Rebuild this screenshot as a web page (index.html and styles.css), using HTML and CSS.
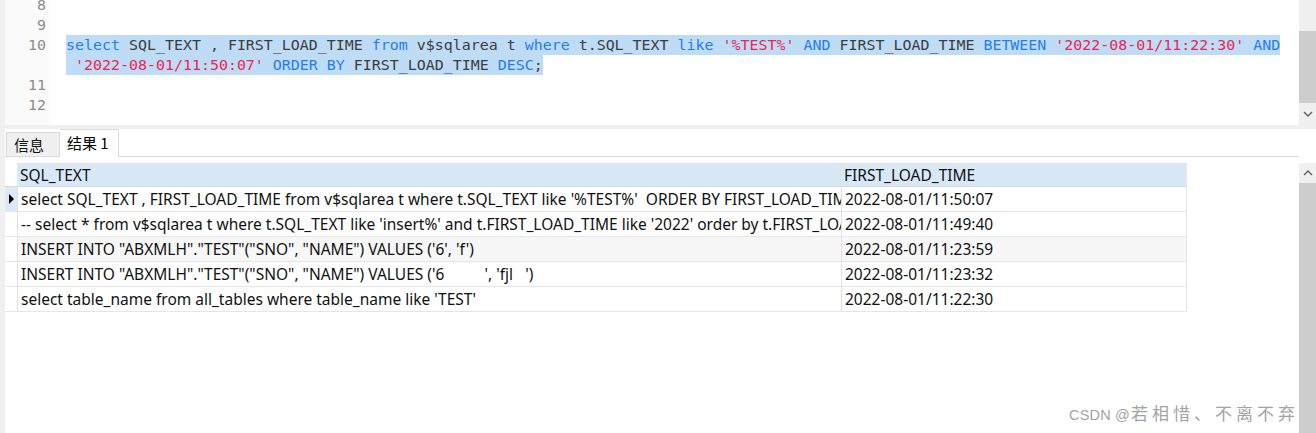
FILE: index.html
```html
<!DOCTYPE html>
<html lang="zh">
<head>
<meta charset="utf-8">
<title>SQL</title>
<link rel="stylesheet" href="styles.css">
</head>
<body>
<div class="page">
  <div class="editor">
    <div class="edge"></div>
    <div class="gutter">
      <div class="lines">
        <div class="ln">8</div>
        <div class="ln">9</div>
        <div class="ln">10</div>
        <div class="ln"></div>
        <div class="ln">11</div>
        <div class="ln">12</div>
      </div>
    </div>
    <div class="code">
      <div class="lines">
        <div class="cl"></div>
        <div class="cl"></div>
        <div class="cl"><span class="sel"><span class="kw">select</span> SQL_TEXT , FIRST_LOAD_TIME <span class="kw">from</span> v$sqlarea t <span class="kw">where</span> t.SQL_TEXT <span class="kw">like</span> <span class="str">'%TEST%'</span> <span class="kw">AND</span> FIRST_LOAD_TIME <span class="kw">BETWEEN</span> <span class="str">'2022-08-01/11:22:30'</span> <span class="kw">AND</span></span></div>
        <div class="cl"><span class="sel"> <span class="str">'2022-08-01/11:50:07'</span> <span class="kw">ORDER BY</span> FIRST_LOAD_TIME <span class="kw">DESC</span>;</span></div>
        <div class="cl"></div>
        <div class="cl"></div>
      </div>
    </div>
    <div class="vscroll">
      <div class="sb-track-top"></div>
      <div class="sb-thumb sb-thumb-editor"></div>
      <div class="sb-btn">
        <svg width="10" height="6" viewBox="0 0 10 6"><path d="M1 1 L5 5 L9 1" fill="none" stroke="#606060" stroke-width="1.4"/></svg>
      </div>
    </div>
  </div>
  <div class="sep"></div>
  <div class="bottom">
    <div class="edge"></div>
    <div class="results">
      <div class="tabs">
        <div class="tab">信息</div>
        <div class="tab active">结果 1</div>
      </div>
      <div class="grid">
        <div class="row head">
          <div class="ind"></div>
          <div class="cell c1">SQL_TEXT</div>
          <div class="cell c2">FIRST_LOAD_TIME</div>
        </div>
        <div class="row">
          <div class="ind cur"><span class="arrow"></span></div>
          <div class="cell c1">select SQL_TEXT , FIRST_LOAD_TIME from v$sqlarea t where t.SQL_TEXT like '%TEST%'  ORDER BY FIRST_LOAD_TIME DESC</div>
          <div class="cell c2">2022-08-01/11:50:07</div>
        </div>
        <div class="row">
          <div class="ind"></div>
          <div class="cell c1">-- select * from v$sqlarea t where t.SQL_TEXT like 'insert%' and t.FIRST_LOAD_TIME like '2022' order by t.FIRST_LOAD_TIME</div>
          <div class="cell c2">2022-08-01/11:49:40</div>
        </div>
        <div class="row alt">
          <div class="ind"></div>
          <div class="cell c1">INSERT INTO "ABXMLH"."TEST"("SNO", "NAME") VALUES ('6', 'f')</div>
          <div class="cell c2">2022-08-01/11:23:59</div>
        </div>
        <div class="row">
          <div class="ind"></div>
          <div class="cell c1">INSERT INTO "ABXMLH"."TEST"("SNO", "NAME") VALUES ('6          ', 'fjl   ')</div>
          <div class="cell c2">2022-08-01/11:23:32</div>
        </div>
        <div class="row">
          <div class="ind"></div>
          <div class="cell c1">select table_name from all_tables where table_name like 'TEST'</div>
          <div class="cell c2">2022-08-01/11:22:30</div>
        </div>
      </div>
    </div>
    <div class="vscroll grid-scroll">
      <div class="sb-btn top">
        <svg width="10" height="6" viewBox="0 0 10 6"><path d="M1 5 L5 1 L9 5" fill="none" stroke="#606060" stroke-width="1.4"/></svg>
      </div>
      <div class="sb-thumb sb-thumb-grid"></div>
    </div>
  </div>
  <div class="watermark"><span class="wm-latin">CSDN @</span><span class="wm-cjk">若相惜、不离不弃</span></div>
</div>
</body>
</html>
```

FILE: styles.css
```css
html, body {
  margin: 0;
  padding: 0;
  background: #ffffff;
}
.page {
  position: relative;
  width: 1316px;
  height: 433px;
  overflow: hidden;
  display: flex;
  flex-direction: column;
}
.edge {
  width: 5px;
  flex: none;
  background: #f0f0f0;
}
.editor {
  height: 125px;
  display: flex;
  flex: none;
  overflow: hidden;
}
.gutter {
  width: 44px;
  flex: none;
  background: #fafafa;
  overflow: hidden;
}
.lines {
  margin-top: -5px;
}
.ln, .cl {
  height: 20px;
  line-height: 20px;
  font-family: "DejaVu Sans Mono", "Liberation Mono", monospace;
  font-size: 14.95px;
  white-space: pre;
}
.ln {
  text-align: right;
  padding-right: 3px;
  color: #8c8c8c;
}
.code {
  flex: 1;
  padding-left: 17px;
  overflow: hidden;
  color: #3c3c3c;
}
.sel {
  background: #bfdcf7;
  display: inline-block;
  height: 20px;
}
.kw { color: #1f7ef2; }
.str { color: #f2234f; }
.vscroll {
  width: 17px;
  flex: none;
  background: #f0f0f0;
  display: flex;
  flex-direction: column;
  position: relative;
  z-index: 1;
}
.sb-track-top {
  height: 31px;
}
.sb-thumb {
  background: #cdcdcd;
}
.sb-thumb-editor {
  height: 72px;
}
.sb-btn {
  height: 21px;
  display: flex;
  align-items: center;
  justify-content: center;
}
.sep {
  height: 4px;
  flex: none;
  background: #f0f0f0;
}
.bottom {
  flex: 1;
  display: flex;
  min-height: 0;
}
.results {
  flex: 1;
  display: flex;
  flex-direction: column;
  font-family: "Noto Sans", "Noto Sans CJK SC", sans-serif;
  font-size: 15.5px;
  color: #111111;
}
.tabs {
  height: 27px;
  display: flex;
  align-items: flex-end;
  border-bottom: 1px solid #dadada;
  padding-left: 1px;
}
.tab {
  height: 23px;
  padding: 0 7px;
  border: 1px solid #d9d9d9;
  border-bottom: none;
  background: #f0f0f0;
  font-family: "Noto Sans CJK SC", sans-serif;
  font-size: 15px;
  line-height: 24px;
  width: 38px;
}
.tab.active {
  height: 27px;
  margin-bottom: -1px;
  background: #ffffff;
  border-left: none;
  width: 44px;
  line-height: 26px;
  color: #000;
}
.grid {
  margin-top: 6px;
  width: 1182px;
}
.row {
  display: flex;
  height: 24px;
  border-bottom: 1px solid #e6e6e6;
  background: #ffffff;
}
.row.head {
  height: 23px;
  border-bottom: 1px solid #cfdceb;
}
.row.head .cell {
  background: #d9e8f7;
}
.row.alt .cell {
  background: #f7f7f7;
}
.ind {
  width: 12px;
  flex: none;
  border-right: 1px solid #e1e1e1;
  display: flex;
  align-items: center;
  justify-content: center;
}
.row.head .ind {
  border-right: none;
}
.ind.cur {
  background: #dde9f6;
}
.arrow {
  width: 0;
  height: 0;
  border-top: 5px solid transparent;
  border-bottom: 5px solid transparent;
  border-left: 5px solid #000;
  margin-left: 1px;
}
.cell {
  padding-left: 3px;
  line-height: 25px;
  white-space: pre;
  overflow: hidden;
}
.c1 {
  width: 820px;
  flex: none;
  border-right: 1px solid #e1e1e1;
}
.c2 {
  flex: 1;
  border-right: 1px solid #e6e6e6;
}
.grid-scroll {
  margin-top: 34px;
  background: #cdcdcd;
}
.sb-btn.top {
  height: 20px;
  background: #f0f0f0;
}
.sb-thumb-grid {
  flex: 1;
}
.watermark {
  position: absolute;
  left: 1069px;
  top: 403px;
  line-height: 20px;
  color: #a3a3a3;
  white-space: nowrap;
}
.wm-latin {
  font-family: "Liberation Sans", sans-serif;
  font-size: 14.5px;
  letter-spacing: 0.2px;
}
.wm-cjk {
  font-family: "Noto Sans CJK SC", sans-serif;
  font-size: 17px;
  letter-spacing: 4px;
  margin-left: 1px;
}
```
